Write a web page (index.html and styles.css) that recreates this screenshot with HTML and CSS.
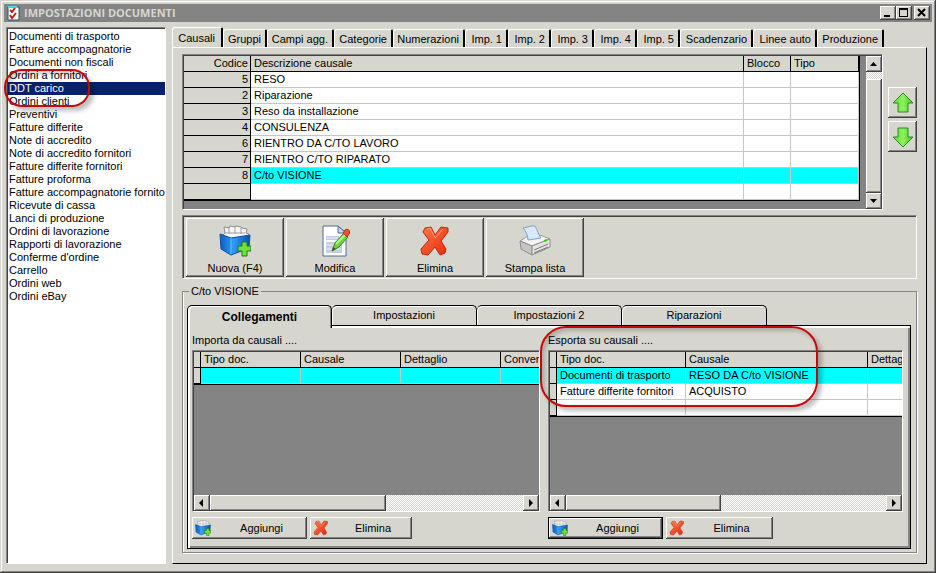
FILE: index.html
```html
<!DOCTYPE html>
<html lang="it">
<head>
    <meta charset="UTF-8">
    <meta name="viewport" content="width=device-width, initial-scale=1.0">
    <title>Impostazioni documenti</title>
    <link rel="stylesheet" href="styles.css">
</head>
<body>
    <svg class="defs" aria-hidden="true">
        <linearGradient id="blue" x1="0" y1="0" x2="1" y2="0">
            <stop offset="0" stop-color="#0a5fc4"/>
            <stop offset="0.45" stop-color="#2f9bf5"/>
            <stop offset="1" stop-color="#0b50a8"/>
        </linearGradient>
        <linearGradient id="red" x1="0" y1="0" x2="1" y2="1">
            <stop offset="0" stop-color="#ff7a4a"/>
            <stop offset="1" stop-color="#e8280c"/>
        </linearGradient>
        <linearGradient id="green" x1="0" y1="0" x2="1" y2="0">
            <stop offset="0" stop-color="#5fd63c"/>
            <stop offset="0.5" stop-color="#8cf25a"/>
            <stop offset="1" stop-color="#4cc42a"/>
        </linearGradient>
        <symbol id="box" viewBox="0 0 32 32">
            <path d="M4 10l2-2-1-6 5 1 1-2 5 1 1-1 5 1 1 1 5 1-1 4 3 1v3l-18 4z" fill="#f6f6f6" stroke="#8c8c8c"/>
            <path d="M10 3v6M16 2v7M22 3v6M6 8h20" fill="none" stroke="#a0a0a0"/>
            <path d="M1 9l11 4 19-3-1 13-18 7L2 24z" fill="url(#blue)" stroke="#0d4f9c"/>
            <path d="M12 13v16" stroke="#6fbcff"/>
            <path d="M23 17h5v4h4v5h-4v5h-5v-5h-4v-5h4z" fill="#6fe03c" stroke="#1c7d12"/>
        </symbol>
        <symbol id="edit" viewBox="0 0 32 32">
            <path d="M4 1h15l8 7v23H4z" fill="#fff" stroke="#4b6c9c"/>
            <path d="M19 1v7h8z" fill="#c9d9ee" stroke="#4b6c9c"/>
            <path d="M7 11h13v4H7zM7 17h16v11H7z" fill="#c3cde4"/>
            <path d="M7 13h12M7 20h9M7 24h15" stroke="#e8edf7"/>
            <path d="M13 26l3-8 9-10 4 4-9 10z" fill="#6fd63a" stroke="#2c8a18"/>
            <path d="M17 19l9-9" stroke="#b9f58f" stroke-width="2"/>
            <path d="M13 26l1-4 3 2z" fill="#5c4a2a"/>
            <path d="M24 8l2-3c3-2 6 1 4 4l-2 3z" fill="#f0542c" stroke="#b32c10"/>
        </symbol>
        <symbol id="cross" viewBox="0 0 32 32">
            <path d="M6 3l6-1 4 8 6-8 7 1v4l-7 9 5 8-1 4-5 2-5-8-7 8-6-1-1-5 8-9-6-8z" fill="url(#red)" stroke="#c02408"/>
            <path d="M8 4l3-1 5 10 8-9" fill="none" stroke="#ff9c78"/>
        </symbol>
        <symbol id="printer" viewBox="0 0 32 32">
            <path d="M1 16l8-5 1 2 10-1 1-2 10 4-18 7z" fill="#f2f2f2" stroke="#9a9a9a"/>
            <path d="M4 3c4 0 8-3 12-2 2 3 3 8 6 12l-13 2c0-4-2-9-5-12z" fill="#d6eafc" stroke="#7ba2cc"/>
            <path d="M1 16l12 5v9L2 24z" fill="#c6c6c6" stroke="#8c8c8c"/>
            <path d="M13 21l18-7v8l-18 8z" fill="#e4e4e4" stroke="#8c8c8c"/>
            <path d="M15 25l14-6M15 28l14-6" stroke="#777"/>
            <path d="M25 16l3-1" stroke="#3cc818" stroke-width="2"/>
        </symbol>
        <symbol id="up" viewBox="0 0 22 22">
            <path d="M11 1l10 10h-5v9H6v-9H1z" fill="url(#green)" stroke="#23901a"/>
        </symbol>
        <symbol id="down" viewBox="0 0 22 22">
            <path d="M11 21L1 11h5V2h10v9h5z" fill="url(#green)" stroke="#23901a"/>
        </symbol>
        <symbol id="tri-up" viewBox="0 0 8 8"><path d="M0 6h7L3.500 2z"/></symbol>
        <symbol id="tri-down" viewBox="0 0 8 8"><path d="M0 2h7L3.500 6z"/></symbol>
        <symbol id="tri-left" viewBox="0 0 8 8"><path d="M5 0v8L1 4z"/></symbol>
        <symbol id="tri-right" viewBox="0 0 8 8"><path d="M2 0v8l4-4z"/></symbol>
    </svg>

    <div class="window">
        <header class="titlebar">
            <svg class="app-icon" viewBox="0 0 14 16">
                <path d="M1 2h11v13H1z" fill="#fff" stroke="#1a5a64"/>
                <path d="M1 2h9" stroke="#38e0e8" stroke-width="2"/>
                <path d="M3 5l2 2 3-4M3 10l2 3 4-5" fill="none" stroke="#d01818" stroke-width="2"/>
            </svg>
            <h1>IMPOSTAZIONI DOCUMENTI</h1>
            <button class="win-btn" aria-label="Riduci a icona"><svg viewBox="0 0 12 10"><path d="M2 7h6v2H2z"/></svg></button>
            <button class="win-btn" aria-label="Ingrandisci"><svg viewBox="0 0 12 10"><path d="M1 0h9v9H1zM2 2v6h7V2z" fill-rule="evenodd"/></svg></button>
            <button class="win-btn close" aria-label="Chiudi"><svg viewBox="0 0 12 10"><path d="M2 1l7 7M9 1L2 8" stroke="#000" stroke-width="2"/></svg></button>
        </header>

        <div class="content">
            <aside class="sidebar">
                <select class="doc-list" size="21" aria-label="Documenti">
                    <option>Documenti di trasporto</option>
                    <option>Fatture accompagnatorie</option>
                    <option>Documenti non fiscali</option>
                    <option>Ordini a fornitori</option>
                    <option selected>DDT carico</option>
                    <option>Ordini clienti</option>
                    <option>Preventivi</option>
                    <option>Fatture differite</option>
                    <option>Note di accredito</option>
                    <option>Note di accredito fornitori</option>
                    <option>Fatture differite fornitori</option>
                    <option>Fatture proforma</option>
                    <option>Fatture accompagnatorie fornitori</option>
                    <option>Ricevute di cassa</option>
                    <option>Lanci di produzione</option>
                    <option>Ordini di lavorazione</option>
                    <option>Rapporti di lavorazione</option>
                    <option>Conferme d'ordine</option>
                    <option>Carrello</option>
                    <option>Ordini web</option>
                    <option>Ordini eBay</option>
                </select>
                <span class="ring ring-doc"></span>
            </aside>

            <main class="main">
                <div class="tabs" role="tablist">
                    <button class="tab active" role="tab">Causali</button>
                    <button class="tab" role="tab">Gruppi</button>
                    <button class="tab" role="tab">Campi agg.</button>
                    <button class="tab" role="tab">Categorie</button>
                    <button class="tab" role="tab">Numerazioni</button>
                    <button class="tab" role="tab">Imp. 1</button>
                    <button class="tab" role="tab">Imp. 2</button>
                    <button class="tab" role="tab">Imp. 3</button>
                    <button class="tab" role="tab">Imp. 4</button>
                    <button class="tab" role="tab">Imp. 5</button>
                    <button class="tab" role="tab">Scadenzario</button>
                    <button class="tab" role="tab">Linee auto</button>
                    <button class="tab" role="tab">Produzione</button>
                </div>

                <div class="panel">
                    <div class="top">
                        <div class="grid causali">
                            <div class="grid-body">
                                <table>
                                    <colgroup><col class="c-code"><col><col class="c-blocco"><col class="c-tipo"></colgroup>
                                    <thead>
                                        <tr><th class="num">Codice</th><th>Descrizione causale</th><th>Blocco</th><th>Tipo</th></tr>
                                    </thead>
                                    <tbody>
                                        <tr><th class="num">5</th><td>RESO</td><td></td><td></td></tr>
                                        <tr><th class="num">2</th><td>Riparazione</td><td></td><td></td></tr>
                                        <tr><th class="num">3</th><td>Reso da installazione</td><td></td><td></td></tr>
                                        <tr><th class="num">4</th><td>CONSULENZA</td><td></td><td></td></tr>
                                        <tr><th class="num">6</th><td>RIENTRO DA C/TO LAVORO</td><td></td><td></td></tr>
                                        <tr><th class="num">7</th><td>RIENTRO C/TO RIPARATO</td><td></td><td></td></tr>
                                        <tr class="sel"><th class="num">8</th><td>C/to VISIONE</td><td></td><td></td></tr>
                                        <tr><th></th><td></td><td></td><td></td></tr>
                                    </tbody>
                                </table>
                            </div>
                            <div class="scroll vertical">
                                <button class="scroll-btn" aria-label="Su"><svg><use href="#tri-up"/></svg></button>
                                <div class="thumb"></div>
                                <button class="scroll-btn" aria-label="Giù"><svg><use href="#tri-down"/></svg></button>
                            </div>
                        </div>
                        <div class="movers">
                            <button class="mover" aria-label="Sposta su"><svg><use href="#up"/></svg></button>
                            <button class="mover" aria-label="Sposta giù"><svg><use href="#down"/></svg></button>
                        </div>
                    </div>

                    <div class="toolbar">
                        <button class="tool"><svg><use href="#box"/></svg>Nuova (F4)</button>
                        <button class="tool"><svg><use href="#edit"/></svg>Modifica</button>
                        <button class="tool"><svg><use href="#cross"/></svg>Elimina</button>
                        <button class="tool"><svg><use href="#printer"/></svg>Stampa lista</button>
                    </div>

                    <fieldset class="group">
                        <legend>C/to VISIONE</legend>
                        <div class="subtabs" role="tablist">
                            <button class="subtab active" role="tab">Collegamenti</button>
                            <button class="subtab" role="tab">Impostazioni</button>
                            <button class="subtab" role="tab">Impostazioni 2</button>
                            <button class="subtab" role="tab">Riparazioni</button>
                        </div>
                        <div class="subpanel">
                            <section class="links">
                                <h2>Importa da causali ....</h2>
                                <div class="grid">
                                    <div class="grid-body">
                                        <table class="wide-import">
                                            <colgroup><col class="c-mark"><col><col><col><col></colgroup>
                                            <thead>
                                                <tr><th></th><th>Tipo doc.</th><th>Causale</th><th>Dettaglio</th><th>Converti</th></tr>
                                            </thead>
                                            <tbody>
                                                <tr class="sel"><th></th><td></td><td></td><td></td><td></td></tr>
                                            </tbody>
                                        </table>
                                    </div>
                                    <div class="scroll">
                                        <button class="scroll-btn" aria-label="Sinistra"><svg><use href="#tri-left"/></svg></button>
                                        <div class="thumb"></div>
                                        <button class="scroll-btn" aria-label="Destra"><svg><use href="#tri-right"/></svg></button>
                                    </div>
                                </div>
                                <div class="actions">
                                    <button class="action add"><svg><use href="#box"/></svg><span>Aggiungi</span></button>
                                    <button class="action"><svg><use href="#cross"/></svg><span>Elimina</span></button>
                                </div>
                            </section>

                            <section class="links export">
                                <h2>Esporta su causali ....</h2>
                                <div class="grid">
                                    <div class="grid-body">
                                        <table class="wide-export">
                                            <colgroup><col class="c-mark"><col class="c-doc"><col class="c-causale"><col></colgroup>
                                            <thead>
                                                <tr><th></th><th>Tipo doc.</th><th>Causale</th><th>Dettaglio</th></tr>
                                            </thead>
                                            <tbody>
                                                <tr class="sel"><th></th><td>Documenti di trasporto</td><td>RESO DA C/to VISIONE</td><td></td></tr>
                                                <tr><th></th><td>Fatture differite fornitori</td><td>ACQUISTO</td><td></td></tr>
                                                <tr><th></th><td></td><td></td><td></td></tr>
                                            </tbody>
                                        </table>
                                    </div>
                                    <div class="scroll">
                                        <button class="scroll-btn" aria-label="Sinistra"><svg><use href="#tri-left"/></svg></button>
                                        <div class="thumb"></div>
                                        <button class="scroll-btn" aria-label="Destra"><svg><use href="#tri-right"/></svg></button>
                                    </div>
                                </div>
                                <div class="actions">
                                    <button class="action add default"><svg><use href="#box"/></svg><span>Aggiungi</span></button>
                                    <button class="action"><svg><use href="#cross"/></svg><span>Elimina</span></button>
                                </div>
                                <span class="ring ring-export"></span>
                            </section>
                        </div>
                    </fieldset>
                </div>
            </main>
        </div>
    </div>
</body>
</html>
```
FILE: styles.css
```css
* {
    box-sizing: border-box;
}
body {
    margin: 0;
    font: 11px/13px "Liberation Sans", Arial, sans-serif;
    color: #000;
    background: #d6d6ce;
}
button, select {
    font: inherit;
    color: inherit;
    margin: 0;
    padding: 0;
    border: 0;
    border-radius: 0;
    background: #d6d6ce;
}
h1, h2 {
    margin: 0;
    font-size: inherit;
    font-weight: normal;
}
.defs {
    position: absolute;
    width: 0;
    height: 0;
}
.window {
    min-height: 100vh;
    display: flex;
    flex-direction: column;
    padding: 4px;
    box-shadow: inset -1px -1px #424242, inset 1px 1px #d6d6ce, inset -2px -2px #848484, inset 2px 2px #fff;
}

/* title bar */
.titlebar {
    display: flex;
    align-items: center;
    height: 18px;
    padding: 0 2px 0 3px;
    background: #848484;
    color: #d6d6ce;
}
.titlebar h1 {
    flex: 1;
    font: bold 11px/18px "Open Sans", sans-serif;
}
.app-icon {
    width: 14px;
    height: 16px;
    margin-right: 3px;
}
.win-btn {
    width: 16px;
    height: 14px;
    padding: 1px;
    box-shadow: inset -1px -1px #424242, inset 1px 1px #fff, inset -2px -2px #848484;
}
.win-btn svg {
    display: block;
    width: 12px;
    height: 10px;
    margin: 1px;
}
.close {
    margin-left: 2px;
}

.content {
    flex: 1;
    display: flex;
    gap: 6px;
    padding: 5px 5px 5px 2px;
}
.sidebar {
    position: relative;
    width: 160px;
    display: flex;
}
.doc-list {
    width: 100%;
    overflow: hidden;
    background: #fff;
    border: 1px solid;
    border-color: #848484 #fff #fff #848484;
    box-shadow: inset 1px 1px #424242;
    padding: 2px 0 0 1px;
    outline: 0;
}
.doc-list option {
    padding: 0 0 0 1px;
    min-height: 13px;
    height: 13px;
    line-height: 13px;
}
.doc-list option:checked {
    background: #08216b linear-gradient(#08216b, #08216b);
    color: #fff;
}

/* main tabs */
.main {
    flex: 1;
    min-width: 0;
    display: flex;
    flex-direction: column;
}
.tabs {
    display: grid;
    grid-template-columns: 51px 44px 67px 59px 72px repeat(5, 43px) 73px 64px 67px;
    align-items: end;
    height: 20px;
}
.tab {
    height: 18px;
    padding: 2px 4px 0 0;
    text-align: right;
    white-space: nowrap;
    border-top: 1px solid #fff;
    border-left: 1px solid #fff;
    border-right: 2px solid #000;
    border-radius: 3px 2px 0 0;
}
.tab.active {
    height: 20px;
    padding-right: 6px;
}
.panel {
    flex: 1;
    display: flex;
    flex-direction: column;
    padding: 6px 9px 10px;
    border: 1px solid;
    border-color: #fff #000 #000 #fff;
}
.top {
    display: flex;
    gap: 5px;
}

/* data grids */
.grid {
    display: flex;
    flex-direction: column;
    background: #848484;
    border: 1px solid;
    border-color: #848484 #fff #fff #848484;
    box-shadow: inset 1px 1px #424242;
    padding: 1px 0 0 1px;
}
.grid-body {
    flex: 1;
    overflow: hidden;
}
table {
    width: 100%;
    table-layout: fixed;
    border-collapse: separate;
    border-spacing: 0;
    border-bottom: 1px solid #000;
}
th, td {
    height: 16px;
    padding: 0 3px;
    line-height: 15px;
    text-align: left;
    font-weight: normal;
    white-space: nowrap;
    border-right: 1px solid #c6c6c6;
    border-bottom: 1px solid #c6c6c6;
    background: #fff;
}
th {
    background: #d6d6ce;
    border-color: #000;
}
.num {
    padding: 0 2px;
    text-align: right;
}
.sel td {
    background: #0ff;
}
.c-code { width: 67px; }
.c-blocco { width: 47px; }
.c-tipo { width: 68px; }
.c-mark { width: 7px; }
.c-mark + col { width: 100px; }
.c-mark + .c-doc { width: 129px; }
.c-causale { width: 182px; }
.wide-import { width: 407px; }
.wide-export { width: 418px; }
.links th:first-child {
    padding: 0;
}

.causali {
    flex: 1;
    flex-direction: row;
    height: 156px;
}
.causali table {
    border-right: 1px solid #000;
}
.causali .scroll {
    margin-left: 6px;
}

/* scroll bars */
.scroll {
    display: flex;
    height: 16px;
    background: repeating-conic-gradient(#fff 0 25%, #d6d6ce 0 50%) 0 0 / 2px 2px;
}
.scroll.vertical {
    flex-direction: column;
    width: 16px;
    height: auto;
}
.scroll-btn, .thumb, .tool, .action, .mover {
    background: #d6d6ce;
    box-shadow: inset -1px -1px #424242, inset 1px 1px #fff, inset -2px -2px #848484;
}
.scroll-btn {
    width: 16px;
    height: 16px;
    display: flex;
    align-items: center;
    justify-content: center;
}
.scroll-btn svg {
    width: 8px;
    height: 8px;
}
.scroll-btn:last-child {
    margin-left: auto;
}
.thumb {
    width: 51%;
}
.export .thumb {
    width: 44%;
}
.vertical .thumb {
    flex: 1;
    width: 16px;
    margin-top: 7px;
}

.movers {
    width: 29px;
    padding-top: 33px;
    display: flex;
    flex-direction: column;
    gap: 3px;
}
.mover {
    height: 31px;
}
.mover svg {
    width: 22px;
    height: 22px;
    vertical-align: middle;
}

.toolbar {
    display: flex;
    gap: 2px;
    height: 64px;
    margin-top: 5px;
    padding: 2px 3px 1px;
    border: 1px solid;
    border-color: #848484 #fff #fff #848484;
    box-shadow: inset 1px 1px #424242;
}
.tool {
    width: 98px;
    display: flex;
    flex-direction: column;
    align-items: center;
    gap: 5px;
    padding-top: 7px;
}
.tool svg {
    width: 32px;
    height: 32px;
}

/* detail of the selected row */
.group {
    flex: 1;
    min-width: 0;
    display: flex;
    flex-direction: column;
    margin: 6px 0 0;
    padding: 7px 5px 3px 4px;
    border: 1px solid #848484;
    box-shadow: 1px 1px #fff, inset 1px 0 #fff;
}
.group legend {
    margin-left: 2px;
    padding: 0 2px;
}
.subtabs {
    display: flex;
}
.subtab {
    width: 145px;
    height: 20px;
    border-top: 1px solid #000;
    border-right: 1px solid #000;
    border-radius: 5px 5px 0 0;
    box-shadow: inset 1px 1px #fff;
}
.subtab.active {
    position: relative;
    height: 23px;
    margin-bottom: -3px;
    border-left: 1px solid #000;
    font-weight: bold;
    font-size: 12px;
    box-shadow: inset 2px 1px #fff, inset -1px 0 #848484;
}
.subpanel {
    flex: 1;
    display: flex;
    gap: 8px;
    padding: 8px 7px 9px 4px;
    border: 1px solid #000;
    box-shadow: inset 2px 2px #fff, inset -2px -2px #848484;
}
.links {
    position: relative;
    flex: 348;
    min-width: 0;
    display: flex;
    flex-direction: column;
}
.export {
    flex: 355;
}
.links h2 {
    margin-bottom: 3px;
}
.links .grid {
    flex: 1;
}
.actions {
    display: flex;
    gap: 3px;
    margin-top: 5px;
}
.action {
    display: flex;
    align-items: center;
    width: 102px;
    height: 22px;
    padding: 0 3px;
}
.action.add {
    width: 115px;
}
.export .action {
    width: 107px;
}
.export .action.add {
    width: 115px;
}
.action svg {
    width: 16px;
    height: 16px;
}
.action span {
    flex: 1;
    padding-left: 8px;
}
.action.default {
    border: 1px solid #000;
}

/* red markers */
.ring {
    position: absolute;
    border: 2px solid #c60808;
    box-shadow: 4px 4px 4px rgba(0, 0, 0, 0.25), inset 3px 3px 4px rgba(0, 0, 0, 0.2);
    pointer-events: none;
}
.ring-doc {
    left: -2px;
    top: 42px;
    width: 86px;
    height: 38px;
    border-radius: 18px;
}
.ring-export {
    left: -8px;
    top: -8px;
    width: 278px;
    height: 81px;
    border-radius: 26px;
}
```
